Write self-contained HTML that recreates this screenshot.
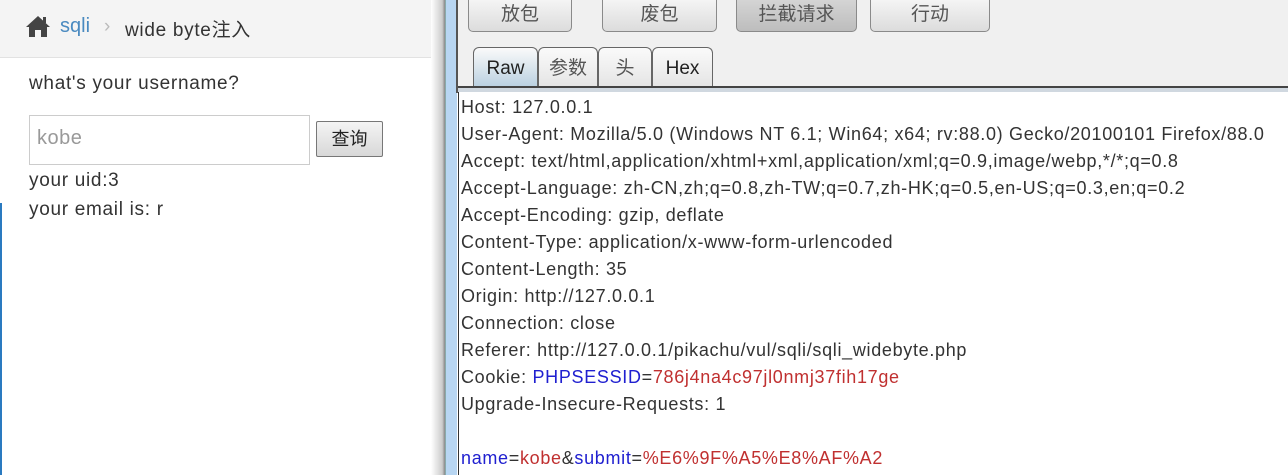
<!DOCTYPE html><html><head><meta charset="utf-8"><style>
body{margin:0;width:1288px;height:475px;overflow:hidden;background:#fff;position:relative;font-family:"Liberation Sans","Noto Sans CJK SC",sans-serif}
.abs{position:absolute}
.bc{left:0;top:0;width:443px;height:57px;background:#f4f4f4;border-bottom:1px solid #e2e2e2}
.lt{color:#333;font-size:19px;letter-spacing:0.7px}
.btn{top:-6px;height:36px;border:1px solid #8a8a8a;border-radius:5px;background:linear-gradient(#f8f8f8,#dcdcdc);font-size:19px;color:#555;text-align:center;line-height:40px}
.tab{top:47px;height:40px;border:1px solid #666;border-bottom:none;border-radius:6px 6px 0 0;background:linear-gradient(#fafafa,#e4e4e4);font-size:19px;color:#222;text-align:center;line-height:42px}
.req{left:461px;top:94px;font-size:18px;line-height:27px;color:#333;white-space:pre;letter-spacing:0.68px}
.b{color:#2020d0}.r{color:#c03030}
</style></head><body>
<div class="abs bc"></div>
<svg class="abs" style="left:25px;top:15px" width="26" height="22" viewBox="0 0 26 22"><path d="M13 1 L1 12 L4 12 L4 22 L10 22 L10 15 L16 15 L16 22 L22 22 L22 12 L25 12 Z" fill="#444"/><rect x="18" y="2" width="3" height="6" fill="#444"/></svg>
<div class="abs" style="left:60px;top:15px;font-size:20px;color:#4a8ac0">sqli</div>
<div class="abs" style="left:104px;top:16px;font-size:19px;color:#bbb">›</div>
<div class="abs lt" style="left:125px;top:15px">wide byte注入</div>
<div class="abs lt" style="left:29px;top:73px">what's your username?</div>
<div class="abs" style="left:29px;top:115px;width:279px;height:48px;border:1px solid #ccc"></div>
<div class="abs" style="left:37px;top:127px;font-size:20px;color:#999;letter-spacing:0.5px">kobe</div>
<div class="abs" style="left:316px;top:121px;width:65px;height:34px;border:1px solid #777;border-radius:2px;background:linear-gradient(#f4f4f4,#d8d8d8);font-size:18px;line-height:34px;text-align:center;color:#222">查询</div>
<div class="abs lt" style="left:29px;top:170px">your uid:3</div>
<div class="abs lt" style="left:29px;top:199px">your email is: r</div>
<div class="abs" style="left:0;top:203px;width:2px;height:272px;background:#2a7ac0"></div>
<div class="abs" style="left:431px;top:0;width:14px;height:475px;background:linear-gradient(90deg,#fff,#ccc 80%,#888)"></div>
<div class="abs" style="left:445px;top:0;width:11px;height:475px;background:#b8d6f2;border-left:1px solid #8aa"></div>
<div class="abs" style="left:456px;top:0;width:832px;height:93px;background:#f0f0f0;border-left:2px solid #555"></div>
<div class="abs btn" style="left:468px;width:102px">放包</div>
<div class="abs btn" style="left:602px;width:113px">废包</div>
<div class="abs btn" style="left:736px;width:119px;background:linear-gradient(#d8d8d8,#bdbdbd)">拦截请求</div>
<div class="abs btn" style="left:870px;width:118px">行动</div>
<div class="abs tab" style="left:473px;width:63px;background:linear-gradient(#fafafa,#b8cfe0)">Raw</div>
<div class="abs tab" style="left:538px;width:58px;color:#555">参数</div>
<div class="abs tab" style="left:598px;width:52px;color:#555">头</div>
<div class="abs tab" style="left:652px;width:59px">Hex</div>
<div class="abs" style="left:458px;top:86px;width:830px;height:4px;background:#d0d8e0;border-top:2px solid #444"></div>
<div class="abs" style="left:458px;top:92px;width:830px;height:383px;background:#fff;border-left:1px solid #333"></div>
<div class="abs req">Host: 127.0.0.1
User-Agent: Mozilla/5.0 (Windows NT 6.1; Win64; x64; rv:88.0) Gecko/20100101 Firefox/88.0
Accept: text/html,application/xhtml+xml,application/xml;q=0.9,image/webp,*/*;q=0.8
Accept-Language: zh-CN,zh;q=0.8,zh-TW;q=0.7,zh-HK;q=0.5,en-US;q=0.3,en;q=0.2
Accept-Encoding: gzip, deflate
Content-Type: application/x-www-form-urlencoded
Content-Length: 35
Origin: http://127.0.0.1
Connection: close
Referer: http://127.0.0.1/pikachu/vul/sqli/sqli_widebyte.php
Cookie: <span class="b">PHPSESSID</span>=<span class="r">786j4na4c97jl0nmj37fih17ge</span>
Upgrade-Insecure-Requests: 1

<span class="b">name</span>=<span class="r">kobe</span>&amp;<span class="b">submit</span>=<span class="r">%E6%9F%A5%E8%AF%A2</span></div>
</body></html>
